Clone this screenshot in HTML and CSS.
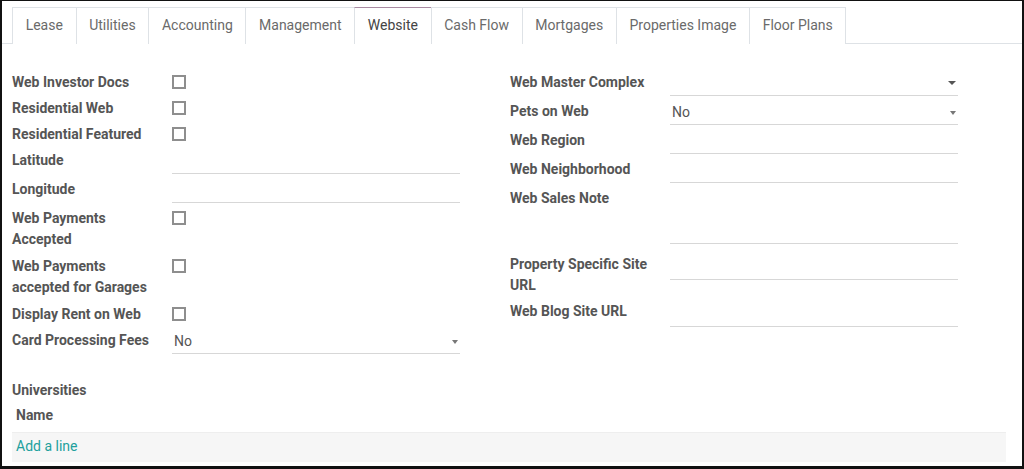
FILE: index.html
```html
<!DOCTYPE html>
<html>
<head>
<meta charset="utf-8">
<title>Website</title>
<link rel="stylesheet" href="styles.css">
</head>
<body>
<div class="frame">
  <div class="tabs">
    <div class="tab">Lease</div>
    <div class="tab">Utilities</div>
    <div class="tab">Accounting</div>
    <div class="tab">Management</div>
    <div class="tab active">Website</div>
    <div class="tab">Cash Flow</div>
    <div class="tab">Mortgages</div>
    <div class="tab">Properties Image</div>
    <div class="tab last">Floor Plans</div>
  </div>
  <div class="sheet">
    <div class="groups">
      <div class="group">
        <div class="row"><div class="label">Web Investor Docs</div><div class="field check"><span class="checkbox"></span></div></div>
        <div class="row"><div class="label">Residential Web</div><div class="field check"><span class="checkbox"></span></div></div>
        <div class="row"><div class="label">Residential Featured</div><div class="field check"><span class="checkbox"></span></div></div>
        <div class="row"><div class="label">Latitude</div><div class="field"><div class="input"></div></div></div>
        <div class="row"><div class="label">Longitude</div><div class="field"><div class="input"></div></div></div>
        <div class="row tall"><div class="label">Web Payments<br>Accepted</div><div class="field check"><span class="checkbox"></span></div></div>
        <div class="row tall"><div class="label">Web Payments<br>accepted for Garages</div><div class="field check"><span class="checkbox"></span></div></div>
        <div class="row"><div class="label">Display Rent on Web</div><div class="field check"><span class="checkbox"></span></div></div>
        <div class="row"><div class="label">Card Processing Fees</div><div class="field"><div class="input select"><span class="value">No</span><span class="caret"></span></div></div></div>
      </div>
      <div class="group">
        <div class="row"><div class="label">Web Master Complex</div><div class="field"><div class="input select"><span class="value"></span><span class="caret dark"></span></div></div></div>
        <div class="row"><div class="label">Pets on Web</div><div class="field"><div class="input select"><span class="value">No</span><span class="caret"></span></div></div></div>
        <div class="row"><div class="label">Web Region</div><div class="field"><div class="input"></div></div></div>
        <div class="row"><div class="label">Web Neighborhood</div><div class="field"><div class="input"></div></div></div>
        <div class="row note"><div class="label">Web Sales Note</div><div class="field"><div class="textarea"></div></div></div>
        <div class="row url"><div class="label">Property Specific Site<br>URL</div><div class="field"><div class="input"></div></div></div>
        <div class="row url"><div class="label">Web Blog Site URL</div><div class="field"><div class="input"></div></div></div>
      </div>
    </div>
    <div class="section-label">Universities</div>
    <table class="list">
      <thead><tr><th>Name</th></tr></thead>
      <tbody><tr><td class="add-line">Add a line</td></tr></tbody>
    </table>
  </div>
</div>
</body>
</html>
```
FILE: styles.css
```css
html, body {
  margin: 0;
  padding: 0;
  background: #ffffff;
}
body {
  font-family: Roboto, "Noto Sans", "Liberation Sans", sans-serif;
  font-size: 14px;
  color: #555555;
}
.frame {
  box-sizing: border-box;
  width: 1024px;
  height: 469px;
  border-style: solid;
  border-color: #111111;
  border-width: 1px 2px 3px 2px;
  overflow: hidden;
  background: #ffffff;
}
.tabs {
  display: flex;
  margin-top: 6px;
  padding-left: 10px;
  border-bottom: 1px solid #dee2e6;
  height: 36px;
}
.tab {
  box-sizing: border-box;
  height: 37px;
  padding: 0 12.65px;
  line-height: 35px;
  border-top: 1px solid #dee2e6;
  border-left: 1px solid #dee2e6;
  color: #6a6a6a;
  background: #ffffff;
  white-space: nowrap;
}
.tab.last {
  border-right: 1px solid #dee2e6;
}
.tab.active {
  color: #444444;
  border-top-color: #a98aa2;
  position: relative;
  z-index: 1;
}
.sheet {
  padding: 28px 16px 0 10px;
}
.groups {
  display: grid;
  grid-template-columns: 498px 496px;
}
.row {
  display: flex;
  align-items: flex-start;
  margin-bottom: 5px;
}
.row.tall {
  margin-bottom: 6px;
}
.row.note {
  margin-bottom: 10px;
}
.row.url .field {
  padding-top: 2px;
}
.label {
  width: 160px;
  flex: none;
  font-weight: 700;
  line-height: 21px;
  color: #555555;
}
.field {
  width: 288px;
  flex: none;
}
.field.check {
  height: 21px;
}
.checkbox {
  display: block;
  box-sizing: border-box;
  width: 14px;
  height: 14px;
  margin-top: 3px;
  border: 2px solid #8e8e8e;
  background: #ffffff;
}
.input {
  box-sizing: border-box;
  height: 24px;
  border-bottom: 1px solid #d7d7d7;
  padding: 1px 2px 0 2px;
  line-height: 21px;
}
.select {
  display: flex;
  justify-content: space-between;
  align-items: flex-start;
}
.value {
  color: #555555;
}
.caret {
  width: 0;
  height: 0;
  margin-top: 9px;
  border-left: 3px solid transparent;
  border-right: 3px solid transparent;
  border-top: 4px solid #777777;
}
.caret.dark {
  margin-top: 8px;
  border-left-width: 4px;
  border-right-width: 4px;
  border-top-color: #555555;
}
.textarea {
  box-sizing: border-box;
  height: 56px;
  border-bottom: 1px solid #d7d7d7;
}
.section-label {
  margin-top: 21px;
  font-weight: 700;
  line-height: 21px;
  color: #555555;
}
.list {
  width: 994px;
  border-collapse: collapse;
}
.list th {
  text-align: left;
  font-weight: 700;
  color: #555555;
  line-height: 21px;
  padding: 4px 4px 6px 4px;
}
.list td {
  line-height: 21px;
  padding: 3px 4px 5px 4px;
}
.add-line {
  background: #f6f6f6;
  border-top: 1px solid #eeeeee;
  color: #21a09d;
}
```
